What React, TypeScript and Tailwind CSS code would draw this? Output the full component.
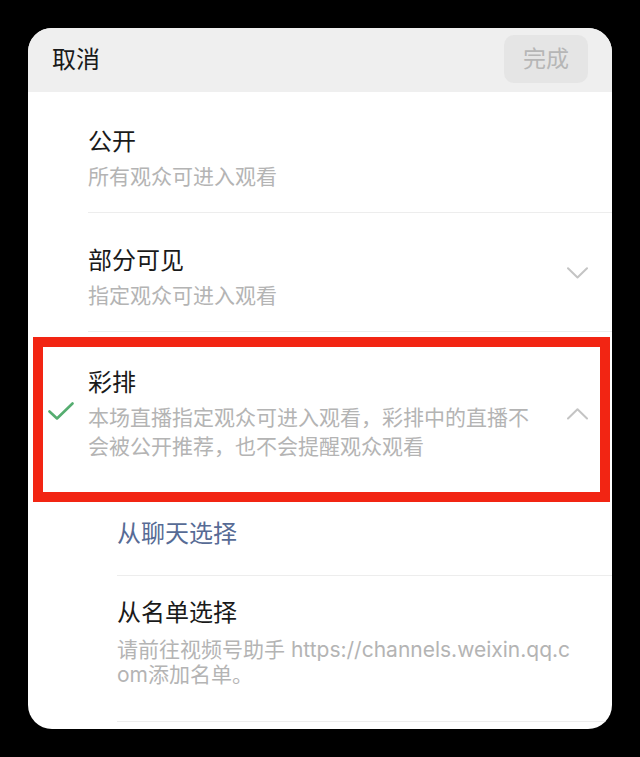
import React from "react";

const font = {
  fontFamily: '"Inter", "Noto Sans CJK SC", "Noto Sans", sans-serif',
};

function ChevronDown() {
  return (
    <svg width="21" height="12" viewBox="0 0 21 12" fill="none">
      <polyline points="1,1.2 10.5,10.5 20,1.2" stroke="#c4c4c4" strokeWidth="2" strokeLinecap="round" strokeLinejoin="round" />
    </svg>
  );
}

function ChevronUp() {
  return (
    <svg width="21" height="12" viewBox="0 0 21 12" fill="none">
      <polyline points="1,10.5 10.5,1.2 20,10.5" stroke="#c4c4c4" strokeWidth="2" strokeLinecap="round" strokeLinejoin="round" />
    </svg>
  );
}

function Check() {
  return (
    <svg width="26" height="20" viewBox="0 0 26 20" fill="none">
      <polyline points="1.5,9.5 9,16.5 24.5,1.5" stroke="#55ad70" strokeWidth="2.6" strokeLinecap="round" strokeLinejoin="round" />
    </svg>
  );
}

export default function App() {
  return (
    <div className="w-[640px] h-[757px] bg-black pt-[28px] pl-[28px]" style={font}>
      <div className="relative w-[584px] h-[701px] rounded-[24px] bg-white overflow-hidden">
        {/* Header */}
        <div className="h-[64px] bg-[#efefef] flex items-center justify-between pl-[24px] pr-[24px]">
          <span className="text-[24px] leading-[32px] text-[#1a1a1a]">取消</span>
          <div className="w-[84px] h-[48px] rounded-[10px] bg-[#e5e5e5] flex items-center justify-center mt-[-2px]">
            <span className="text-[23px] leading-[32px] text-[#b6b6b6]">完成</span>
          </div>
        </div>

        {/* 公开 */}
        <div className="flex pl-[60px]">
          <div className="flex-1 border-b border-[#ededed] pt-[34px] pb-[21px]">
            <div className="text-[24px] leading-[32px] text-[#1a1a1a]">公开</div>
            <div className="mt-[4px] text-[21px] leading-[29px] text-[#b4b4b4]">所有观众可进入观看</div>
          </div>
        </div>

        {/* 部分可见 */}
        <div className="flex pl-[60px]">
          <div className="flex-1 border-b border-[#ededed] pt-[32px] pb-[21px] flex items-start justify-between pr-[24px]">
            <div>
              <div className="text-[24px] leading-[32px] text-[#1a1a1a]">部分可见</div>
              <div className="mt-[4px] text-[21px] leading-[29px] text-[#b4b4b4]">指定观众可进入观看</div>
            </div>
            <div className="mt-[22px]">
              <ChevronDown />
            </div>
          </div>
        </div>

        {/* 彩排 */}
        <div className="flex">
          <div className="w-[60px] pt-[70px] pl-[20px]">
            <Check />
          </div>
          <div className="flex-1 flex items-start justify-between pr-[24px] pt-[35px] pb-[31px]">
            <div>
              <div className="text-[24px] leading-[32px] text-[#1a1a1a]">彩排</div>
              <div className="mt-[4px] text-[21px] leading-[29px] text-[#b4b4b4]">
                本场直播指定观众可进入观看，彩排中的直播不
                <br />
                会被公开推荐，也不会提醒观众观看
              </div>
            </div>
            <div className="mt-[41px]">
              <ChevronUp />
            </div>
          </div>
        </div>

        {/* 从聊天选择 */}
        <div className="flex pl-[89px]">
          <div className="flex-1 h-[84px] border-b border-[#ededed] flex items-center">
            <span className="text-[24px] leading-[32px] text-[#576b95]">从聊天选择</span>
          </div>
        </div>

        {/* 从名单选择 */}
        <div className="flex pl-[89px]">
          <div className="flex-1 border-b border-[#ededed] pt-[21px] pb-[34px]">
            <div className="text-[24px] leading-[32px] text-[#1a1a1a]">从名单选择</div>
            <div className="mt-[8px] text-[21px] leading-[25px] text-[#b4b4b4]">
              请前往视频号助手 https://channels.weixin.qq.c
              <br />
              om添加名单。
            </div>
          </div>
        </div>

        {/* Red annotation box */}
        <div className="absolute left-[5px] top-[309px] w-[577px] h-[165px] border-[10px] border-[#f22513]" />
      </div>
    </div>
  );
}
